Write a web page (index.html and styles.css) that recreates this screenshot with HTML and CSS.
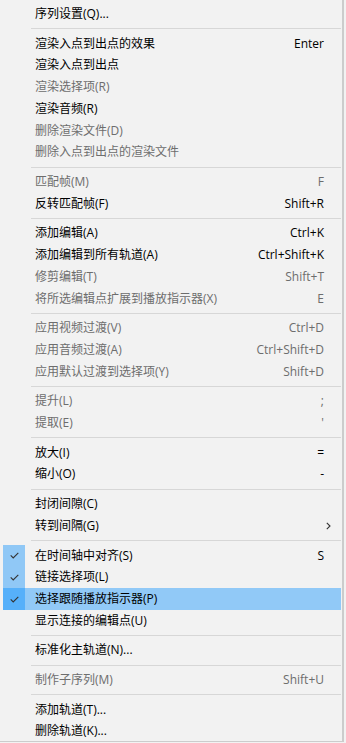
FILE: index.html
```html
<!DOCTYPE html>
<html lang="zh-CN">
<head>
    <meta charset="UTF-8">
    <meta name="viewport" content="width=device-width, initial-scale=1.0">
    <title>序列菜单</title>
    <link rel="stylesheet" href="styles.css">
</head>
<body>
    <div class="menu">
        <div class="item"><span class="check"></span><span class="label">序列设置(Q)...</span><span class="key"></span></div>
        <div class="sep"></div>
        <div class="item"><span class="check"></span><span class="label">渲染入点到出点的效果</span><span class="key">Enter</span></div>
        <div class="item"><span class="check"></span><span class="label">渲染入点到出点</span><span class="key"></span></div>
        <div class="item off"><span class="check"></span><span class="label">渲染选择项(R)</span><span class="key"></span></div>
        <div class="item"><span class="check"></span><span class="label">渲染音频(R)</span><span class="key"></span></div>
        <div class="item off"><span class="check"></span><span class="label">删除渲染文件(D)</span><span class="key"></span></div>
        <div class="item off"><span class="check"></span><span class="label">删除入点到出点的渲染文件</span><span class="key"></span></div>
        <div class="sep"></div>
        <div class="item off"><span class="check"></span><span class="label">匹配帧(M)</span><span class="key">F</span></div>
        <div class="item"><span class="check"></span><span class="label">反转匹配帧(F)</span><span class="key">Shift+R</span></div>
        <div class="sep"></div>
        <div class="item"><span class="check"></span><span class="label">添加编辑(A)</span><span class="key">Ctrl+K</span></div>
        <div class="item"><span class="check"></span><span class="label">添加编辑到所有轨道(A)</span><span class="key">Ctrl+Shift+K</span></div>
        <div class="item off"><span class="check"></span><span class="label">修剪编辑(T)</span><span class="key">Shift+T</span></div>
        <div class="item off"><span class="check"></span><span class="label">将所选编辑点扩展到播放指示器(X)</span><span class="key">E</span></div>
        <div class="sep"></div>
        <div class="item off"><span class="check"></span><span class="label">应用视频过渡(V)</span><span class="key">Ctrl+D</span></div>
        <div class="item off"><span class="check"></span><span class="label">应用音频过渡(A)</span><span class="key">Ctrl+Shift+D</span></div>
        <div class="item off"><span class="check"></span><span class="label">应用默认过渡到选择项(Y)</span><span class="key">Shift+D</span></div>
        <div class="sep"></div>
        <div class="item off"><span class="check"></span><span class="label">提升(L)</span><span class="key">;</span></div>
        <div class="item off"><span class="check"></span><span class="label">提取(E)</span><span class="key">'</span></div>
        <div class="sep"></div>
        <div class="item"><span class="check"></span><span class="label">放大(I)</span><span class="key">=</span></div>
        <div class="item"><span class="check"></span><span class="label">缩小(O)</span><span class="key">-</span></div>
        <div class="sep"></div>
        <div class="item"><span class="check"></span><span class="label">封闭间隙(C)</span><span class="key"></span></div>
        <div class="item sub"><span class="check"></span><span class="label">转到间隔(G)</span><span class="key"></span>
            <svg class="arrow" width="5" height="8" viewBox="0 0 5 8"><path d="M0.8 0.8 L4 4 L0.8 7.2" fill="none" stroke="#333" stroke-width="1.1"/></svg>
        </div>
        <div class="sep"></div>
        <div class="item checked"><span class="check"><svg width="9" height="7" viewBox="0 0 9 7"><path d="M0.7 3.4 L3.2 5.9 L8.3 0.8" fill="none" stroke="#333" stroke-width="1.1"/></svg></span><span class="label">在时间轴中对齐(S)</span><span class="key">S</span></div>
        <div class="item checked"><span class="check"><svg width="9" height="7" viewBox="0 0 9 7"><path d="M0.7 3.4 L3.2 5.9 L8.3 0.8" fill="none" stroke="#333" stroke-width="1.1"/></svg></span><span class="label">链接选择项(L)</span><span class="key"></span></div>
        <div class="item checked hover"><span class="check"><svg width="9" height="7" viewBox="0 0 9 7"><path d="M0.7 3.4 L3.2 5.9 L8.3 0.8" fill="none" stroke="#333" stroke-width="1.1"/></svg></span><span class="label">选择跟随播放指示器(P)</span><span class="key"></span></div>
        <div class="item"><span class="check"></span><span class="label">显示连接的编辑点(U)</span><span class="key"></span></div>
        <div class="sep"></div>
        <div class="item"><span class="check"></span><span class="label">标准化主轨道(N)...</span><span class="key"></span></div>
        <div class="sep"></div>
        <div class="item off"><span class="check"></span><span class="label">制作子序列(M)</span><span class="key">Shift+U</span></div>
        <div class="sep"></div>
        <div class="item"><span class="check"></span><span class="label">添加轨道(T)...</span><span class="key"></span></div>
        <div class="item"><span class="check"></span><span class="label">删除轨道(K)...</span><span class="key"></span></div>
    </div>
</body>
</html>
```

FILE: styles.css
```css
body { margin: 0; background: #f2f2f2; font-family: "Open Sans", "Noto Sans CJK SC", sans-serif; font-size: 12px; }
.menu { width: 344px; height: 742px; box-sizing: border-box; padding: 3px 1px 0 3px; background: #f2f2f2; border-right: 2px solid #cccccc; border-bottom: 1px solid #cccccc; }
.item { position: relative; display: flex; align-items: center; height: 21.75px; color: #000; }
.item.off { color: #6d6d6d; }
.check { flex: 0 0 22px; height: 100%; display: flex; align-items: center; justify-content: center; }
.checked .check { background: #90c8f6; }
.hover { background: #91c9f7; }
.hover .check { background: #56b0fa; }
.label { flex: 1; padding-left: 10px; line-height: 1; white-space: nowrap; }
.key { padding-right: 17px; white-space: nowrap; line-height: 1; }
.arrow { position: absolute; right: 10px; top: 7px; }
.sep { height: 7.9px; margin-left: 28px; display: flex; align-items: center; }
.sep::before { content: ""; display: block; width: 100%; height: 1px; background: #d7d7d7; }
```
